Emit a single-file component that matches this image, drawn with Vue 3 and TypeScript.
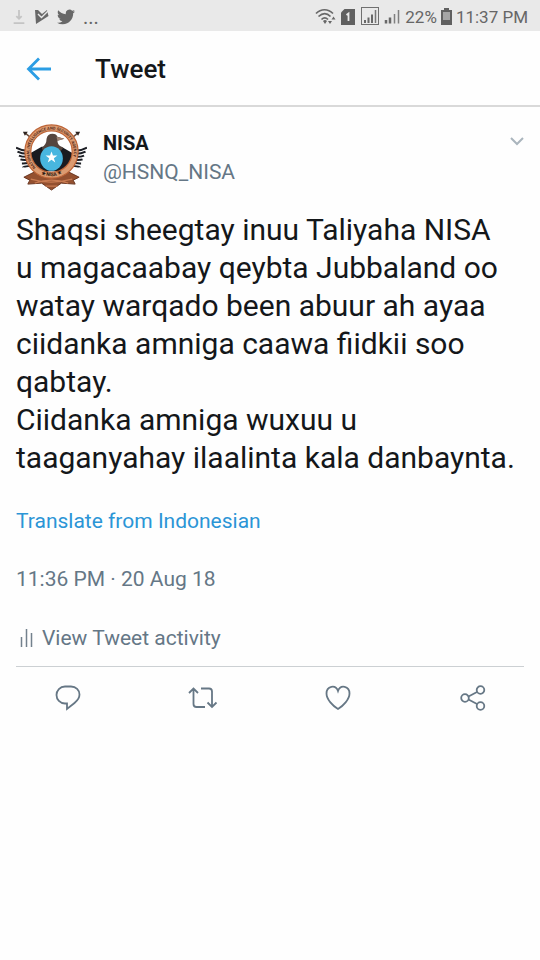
<script setup lang="ts">
import { ref } from 'vue'

interface Tweet {
  name: string
  handle: string
  text: string
  time: string
}

const tweet: Tweet = {
  name: 'NISA',
  handle: '@HSNQ_NISA',
  text: [
    'Shaqsi sheegtay inuu Taliyaha NISA',
    'u magacaabay qeybta Jubbaland oo watay warqado been abuur ah ayaa ciidanka amniga caawa fiidkii soo qabtay.',
    'Ciidanka amniga wuxuu u taaganyahay ilaalinta kala danbaynta.',
  ].join('\n'),
  time: '11:36 PM · 20 Aug 18',
}

const liked = ref(false)
const feathers = [0, 1, 2, 3, 4, 5]
</script>

<template>
  <div class="screen">
    <div class="status">
      <div class="status-group left">
        <svg class="download" width="14" height="16" viewBox="0 0 14 18" aria-hidden="true">
          <path d="M7 1v10M4 8l3 3 3-3M1 16h12" fill="none" stroke="#c4c4c4" stroke-width="2" />
        </svg>
        <svg width="15" height="16" viewBox="0 0 15 16" aria-hidden="true">
          <path d="M1 1h3l4 4 5-4 1.500 6L2 15z" fill="#686868" />
          <path d="M4 5l3.500 3.500L14 2" fill="none" stroke="#e9e9e9" stroke-width="1.400" />
        </svg>
        <svg width="18" height="16" viewBox="0 1.500 24 21" aria-hidden="true">
          <path fill="#686868" d="M23.950 4.570a10 10 0 0 1-2.820.770 4.960 4.960 0 0 0 2.160-2.720c-.950.550-2 .950-3.130 1.180a4.920 4.920 0 0 0-8.380 4.480C7.690 8.090 4.070 6.130 1.640 3.160a4.820 4.820 0 0 0-.670 2.480c0 1.710.870 3.210 2.190 4.100a4.900 4.900 0 0 1-2.230-.620v.060a4.920 4.920 0 0 0 3.950 4.830 5 5 0 0 1-2.210.080 4.940 4.940 0 0 0 4.600 3.420A9.870 9.870 0 0 1 0 19.540a13.990 13.990 0 0 0 7.560 2.210c9.050 0 14-7.500 14-13.980 0-.210 0-.420-.020-.630a9.940 9.940 0 0 0 2.460-2.550z" />
        </svg>
        <span class="more">...</span>
      </div>
      <div class="status-group right">
        <svg width="22" height="18" viewBox="0 0 22 18" aria-label="Wi-Fi">
          <g fill="none" stroke="#686868" stroke-width="1.700">
            <path d="M1 5.500c5-5 12-5 17 0M3.500 8.500c4-3.700 8.500-3.700 12 0M6.500 11.500c2-2 4.500-2 6.500 0" />
          </g>
          <path d="M8 13q2-2 4 0l-2 3zM13 13h4l-2 3zM16.500 11.500h4l-2-3z" fill="#686868" />
        </svg>
        <svg class="sim" width="14" height="16" viewBox="0 0 14 16" aria-label="SIM 1">
          <path d="M3.500 0H14v16H0V3.500z" fill="#606060" />
          <path d="M5.500 6l2-1.500V12" fill="none" stroke="#e9e9e9" stroke-width="1.800" />
        </svg>
        <svg width="19" height="19" viewBox="0 0 19 19" aria-label="Signal">
          <rect x=".500" y=".500" width="17" height="17" fill="none" stroke="#707070" />
          <path d="M4 13v3M7.500 10.500V16M11 7.500V16" stroke="#686868" stroke-width="2" />
          <path d="M14.500 3v13" stroke="#777" stroke-width="1.500" />
        </svg>
        <svg width="17" height="17" viewBox="0 0 17 17" aria-label="Signal">
          <path d="M2 12v3.500M6 9.500v6" stroke="#686868" stroke-width="2.500" />
          <path d="M10.500 6v9.500M14.500 2v13.500" stroke="#808080" stroke-width="1.500" />
        </svg>
        <span class="percent">22%</span>
        <svg width="11" height="17" viewBox="0 0 11 17" aria-label="Battery">
          <path d="M3 0h5v2h3v15H0V2h3z" fill="#606060" />
          <path d="M2 4h7v8H2z" fill="#a5a5a5" />
        </svg>
        <span class="clock">11:37 PM</span>
      </div>
    </div>

    <header class="bar">
      <button class="icon-button" type="button" aria-label="Back">
        <svg width="26" height="26" viewBox="0 0 26 26">
          <path d="M25 13H3M13 2.500L2.500 13 13 23.500" fill="none" stroke="#2b9de4" stroke-width="2.800" />
        </svg>
      </button>
      <h1>Tweet</h1>
    </header>

    <main class="tweet">
      <div class="author">
        <svg class="avatar" width="71" height="71" viewBox="0 0 72 72" role="img" aria-label="NISA emblem">
          <defs>
            <path id="ring-text" d="M20 47A22.500 22.500 0 1 1 52 47" />
            <path id="ring-name" d="M22 51Q36 61 50 51" />
          </defs>
          <path d="M9 12l20 16M63 12L43 28" stroke="#6b5142" stroke-width="1.500" />
          <path d="M7 11l5 0-3 4zM65 11l-5 0 3 4z" fill="#2e2420" />
          <g v-for="i in feathers" :key="i" fill="none" stroke="#1c1e24" stroke-width="2">
            <path :d="`M${15 + i} ${30 + i * 3}Q7 ${31 + i * 3} ${i * 1.5} ${27 + i * 4}`" />
            <path :d="`M${57 - i} ${30 + i * 3}Q65 ${31 + i * 3} ${72 - i * 1.5} ${27 + i * 4}`" />
          </g>
          <path d="M8 57l12-6q16 9 32 0l12 6-6 3 2 4-14-1-10 7-10-7-14 1 2-4z" fill="#94502f" stroke="#6b3823" />
          <path d="M15 59q20 6 42 0M19 63q17-6 34 0M30 66h12" stroke="#c97b52" stroke-width="1.300" fill="none" />
          <circle cx="36" cy="31" r="23.500" fill="#fff" />
          <path d="M14 33l12-7h20l12 7-5 12-9 6H28l-9-6z" fill="#191b20" />
          <path d="M26 27q5-3 5-9 1-5 6-5 4 0 5 3l7 2-7 2q0 5 6 7l-4 5H28z" fill="#55453e" />
          <path d="M41 16l8 2-7 2z" fill="#a08373" />
          <circle cx="36" cy="31" r="24" fill="none" stroke="#dc9b70" stroke-width="6" />
          <circle cx="36" cy="31" r="27" fill="none" stroke="#bd6437" stroke-width="1.200" />
          <circle cx="36" cy="31" r="21" fill="none" stroke="#bd6437" stroke-width="1.200" />
          <ellipse cx="36" cy="38" rx="11.500" ry="12.500" fill="#48b6df" />
          <path d="M36 31l1.500 4h4.500l-3.600 2.800 1.400 4.200-3.800-2.600-3.800 2.600 1.400-4.200L30 35h4.500z" fill="#fff" />
          <text class="ring-label"><textPath href="#ring-text">NATIONAL INTELLIGENCE AND SECURITY AGENCY</textPath></text>
          <text class="ring-title"><textPath href="#ring-name" startOffset="50%" text-anchor="middle">★ NISA ★</textPath></text>
        </svg>
        <div class="names">
          <strong>{{ tweet.name }}</strong>
          <span>{{ tweet.handle }}</span>
        </div>
        <button class="icon-button caret" type="button" aria-label="More options">
          <svg width="14" height="10" viewBox="0 0 14 10">
            <path d="M1 2l6 6 6-6" fill="none" stroke="#aab5bd" stroke-width="2" />
          </svg>
        </button>
      </div>

      <p class="body">{{ tweet.text }}</p>

      <a class="translate" href="#translate">Translate from Indonesian</a>
      <time class="time">{{ tweet.time }}</time>

      <a class="activity" href="#activity">
        <svg width="14" height="20" viewBox="0 0 14 20" aria-hidden="true">
          <path d="M1.500 9v10M6.500 1v18M11.500 5v14" stroke="#73818d" stroke-width="1.500" />
        </svg>
        View Tweet activity
      </a>
    </main>

    <div class="actions">
      <button class="icon-button" type="button" aria-label="Reply">
        <svg width="26" height="26" viewBox="0 0 26 26">
          <path d="M10 1.500h6c5 0 8.500 3.500 8.500 8 0 3.500-2 6-5 8.500L12 24v-5.500h-2c-5 0-8.500-4-8.500-8.500s3.500-8.500 8.500-8.500z" />
        </svg>
      </button>
      <button class="icon-button" type="button" aria-label="Retweet">
        <svg width="30" height="26" viewBox="0 0 30 26">
          <path d="M1 8l4.500-4.500L10 8M5.500 4v15q0 3 3 3H17M13 3.500h8q3 0 3 3V22M19.500 17.500L24 22l4.500-4.500" />
        </svg>
      </button>
      <button class="icon-button" type="button" aria-label="Like" :aria-pressed="liked" @click="liked = !liked">
        <svg width="26" height="26" viewBox="0 0 26 26">
          <path d="M13 24C8 21 1.500 14.500 1.500 8.500c0-7.500 9-9.500 11.500-2.500 2.500-7 11.500-5 11.500 2.500 0 6-6.500 12.500-11.500 15.500z" />
        </svg>
      </button>
      <button class="icon-button" type="button" aria-label="Share">
        <svg width="26" height="26" viewBox="0 0 26 26">
          <circle cx="5" cy="13" r="3.800" />
          <circle cx="20.500" cy="5" r="3.800" />
          <circle cx="20.500" cy="21" r="3.800" />
          <path d="M8.500 11.500L17 7M8.500 14.500L17 19" />
        </svg>
      </button>
    </div>
  </div>
</template>

<style>
body {
  background: #fefefe;
}
</style>

<style scoped>
.screen {
  font-family: Roboto, "Liberation Sans", sans-serif;
  color: #14171a;
}

.status {
  display: flex;
  justify-content: space-between;
  align-items: center;
  height: 31px;
  padding: 2px 12px 0;
  box-sizing: border-box;
  background: #e9e9e9;
  color: #666;
  font-size: 17px;
}

.status-group {
  display: flex;
  align-items: center;
}

.left {
  gap: 8px;
}

.right {
  gap: 4px;
}

.sim {
  margin-right: 2px;
}

.more {
  font-size: 20px;
}

.bar {
  display: flex;
  align-items: center;
  gap: 43px;
  height: 76px;
  padding: 2px 26px 0;
  box-sizing: border-box;
  border-bottom: 2px solid #d9d9d9;
}

h1 {
  margin: 0;
  font-size: 26px;
  font-weight: 500;
}

.icon-button {
  display: flex;
  padding: 0;
  border: 0;
  background: none;
  cursor: pointer;
}

.tweet {
  display: flex;
  flex-direction: column;
  padding: 14px 16px 0;
}

.author {
  display: flex;
  align-items: flex-start;
  gap: 16px;
}

.avatar {
  flex: none;
}

.ring-label {
  font-size: 4px;
  font-weight: 700;
  fill: #502718;
}

.ring-title {
  font-size: 5px;
  font-weight: 700;
  fill: #2d1710;
}

.names {
  display: flex;
  flex: 1;
  flex-direction: column;
  padding-top: 8px;
  font-size: 21px;
  line-height: 29px;
}

.names strong {
  font-size: 20px;
  font-weight: 700;
}

.names span {
  color: #657786;
}

.caret {
  padding-top: 15px;
}

.body {
  margin: 19px 0 0;
  font-size: 30px;
  line-height: 38px;
  white-space: pre-line;
}

.translate,
.time,
.activity {
  font-size: 21px;
  line-height: 24px;
  color: #657786;
  text-decoration: none;
}

.translate {
  margin-top: 32px;
  color: #2b95d6;
}

.time {
  margin-top: 34px;
}

.activity {
  display: flex;
  align-items: center;
  gap: 8px;
  margin-top: 35px;
  padding: 0 4px 16px;
  border-bottom: 1px solid #ccd0d3;
}

.actions {
  display: grid;
  grid-template-columns: repeat(4, 1fr);
  justify-items: center;
  padding: 18px 0;
}

.actions svg {
  fill: none;
  stroke: #667785;
  stroke-width: 1.8;
}
</style>
